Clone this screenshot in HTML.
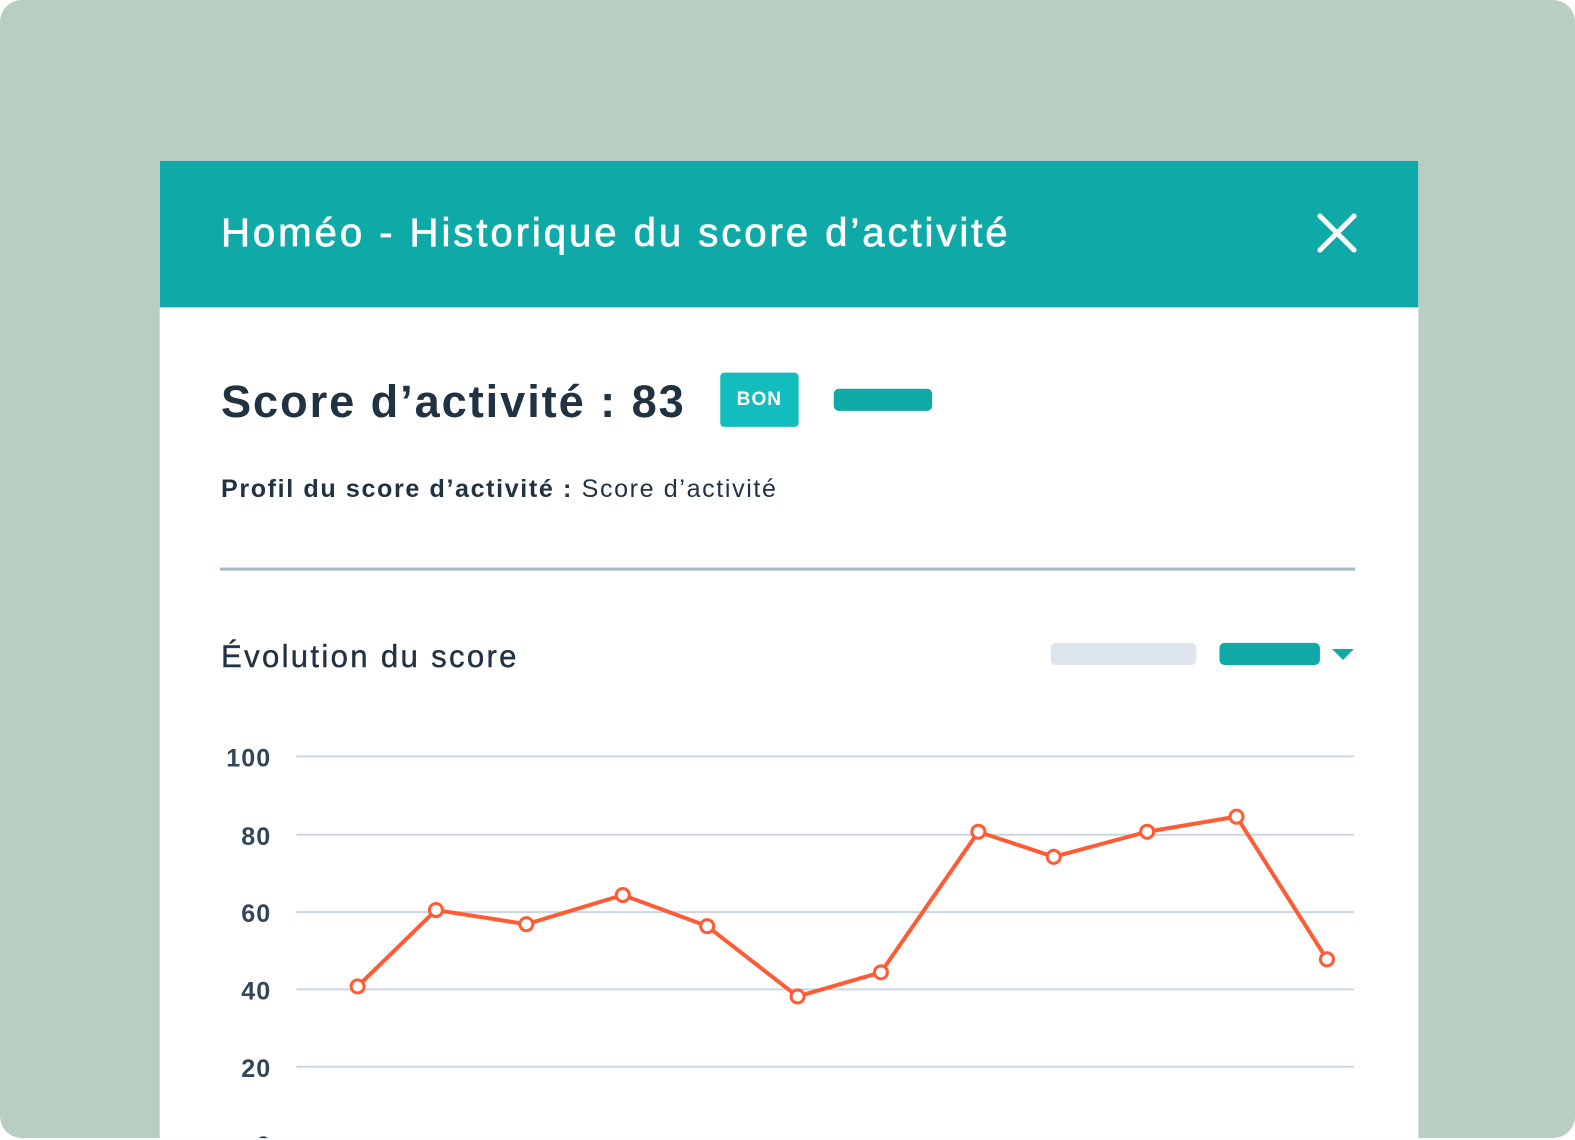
<!DOCTYPE html>
<html><head><meta charset="utf-8"><style>
html,body{margin:0;padding:0;background:#fff;}
body{width:1575px;height:1140px;position:relative;overflow:hidden;font-family:"Liberation Sans",sans-serif;}
.wrap{position:absolute;left:0;top:0;width:1568px;height:1135px;transform:scale(1.0045);transform-origin:0 0;}
.bg{position:absolute;left:0;top:0;width:1568px;height:1133px;background:#b8cec0;border-radius:22px;}
.card{position:absolute;left:159px;top:160px;width:1253px;height:973px;background:#fff;overflow:hidden;}
.hdr{height:146px;background:#0fa9a8;position:relative;}
.hdr h1{position:absolute;left:61px;top:50px;margin:0;color:#fff;font-size:40px;font-weight:normal;letter-spacing:2.9px;-webkit-text-stroke:0.7px #fff;}
.t{position:absolute;color:#213343;}
</style></head><body>
<div class="wrap">
<div class="bg"></div>
<div class="card">
 <div class="hdr"><h1>Homéo - Historique du score d’activité</h1>
  <svg style="position:absolute;left:1152px;top:52px" width="40" height="40"><path d="M3 3L37 37M37 3L3 37" stroke="#fff" stroke-width="5" stroke-linecap="round"/></svg>
 </div>
 <div class="t" style="left:61px;top:214px;font-size:45px;font-weight:bold;letter-spacing:1.9px;">Score d’activité : 83</div>
 <div style="position:absolute;left:558px;top:211px;width:78px;height:54px;background:#13bdbd;border-radius:4px;color:#fff;font-weight:bold;font-size:19px;line-height:54px;text-align:center;letter-spacing:1px;">BON</div>
 <div style="position:absolute;left:671px;top:227px;width:98px;height:22px;background:#0fa9a8;border-radius:5px;"></div>
 <div class="t" style="left:61px;top:313px;font-size:25px;letter-spacing:1.6px;"><b>Profil du score d’activité :</b> Score d’activité</div>
 <div style="position:absolute;left:60px;top:405px;width:1130px;height:3px;background:#a5b5c6;"></div>
 <div class="t" style="left:61px;top:476px;font-size:31px;letter-spacing:2.3px;-webkit-text-stroke:0.4px #213343;">Évolution du score</div>
 <div style="position:absolute;left:887px;top:480px;width:145px;height:22px;background:#dde4ec;border-radius:5px;"></div>
 <div style="position:absolute;left:1055px;top:480px;width:100px;height:22px;background:#0fa9a8;border-radius:5px;"></div>
 <svg style="position:absolute;left:1167px;top:486px" width="22" height="12"><path d="M0 0H22L11 11Z" fill="#0fa9a8"/></svg>
</div>
<svg style="position:absolute;left:0;top:0" width="1568" height="1133">
 <g stroke="#cbd6e2" stroke-width="2">
  <line x1="295" y1="753" x2="1348" y2="753"/><line x1="295" y1="831" x2="1348" y2="831"/>
  <line x1="295" y1="908" x2="1348" y2="908"/><line x1="295" y1="985" x2="1348" y2="985"/>
  <line x1="295" y1="1062" x2="1348" y2="1062"/>
 </g>
 <g fill="#33475b" font-family="Liberation Sans,sans-serif" font-size="25" text-anchor="end" font-weight="bold" letter-spacing="1">
  <text x="270" y="763">100</text><text x="270" y="841">80</text><text x="270" y="918">60</text>
  <text x="270" y="995">40</text><text x="270" y="1072">20</text><text x="270" y="1149">0</text>
 </g>
 <polyline fill="none" stroke="#ff5c35" stroke-width="4" stroke-linejoin="round" points="356,982 434,906 524,920 620,891 704,922 794,992 877,968 974,828 1049,853 1142,828 1231,813 1321,955"/>
 <g fill="#fff" stroke="#ff5c35" stroke-width="3">
  <circle cx="356" cy="982" r="6.5"/><circle cx="434" cy="906" r="6.5"/><circle cx="524" cy="920" r="6.5"/>
  <circle cx="620" cy="891" r="6.5"/><circle cx="704" cy="922" r="6.5"/><circle cx="794" cy="992" r="6.5"/>
  <circle cx="877" cy="968" r="6.5"/><circle cx="974" cy="828" r="6.5"/><circle cx="1049" cy="853" r="6.5"/>
  <circle cx="1142" cy="828" r="6.5"/><circle cx="1231" cy="813" r="6.5"/><circle cx="1321" cy="955" r="6.5"/>
 </g>
</svg>
</div>
</body></html>
